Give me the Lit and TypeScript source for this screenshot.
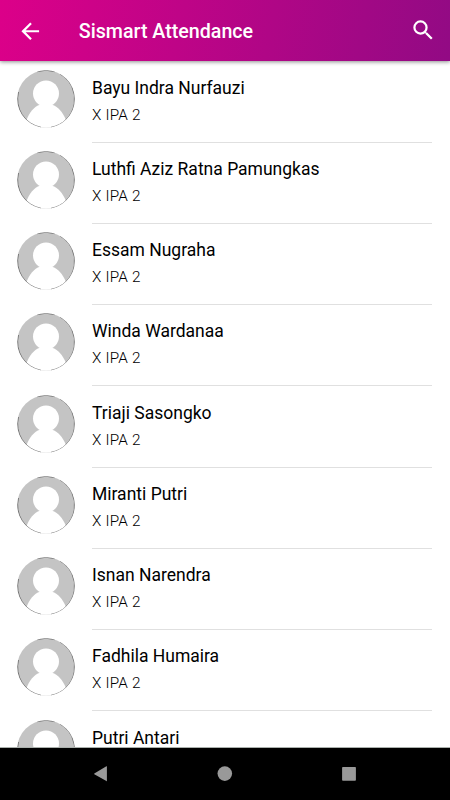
import { LitElement, html, css, nothing } from "lit";
import { customElement, property } from "lit/decorators.js";

interface Student {
  name: string;
  group?: string;
}

const students: Student[] = [
  { name: "Bayu Indra Nurfauzi", group: "X IPA 2" },
  { name: "Luthfi Aziz Ratna Pamungkas", group: "X IPA 2" },
  { name: "Essam Nugraha", group: "X IPA 2" },
  { name: "Winda Wardanaa", group: "X IPA 2" },
  { name: "Triaji Sasongko", group: "X IPA 2" },
  { name: "Miranti Putri", group: "X IPA 2" },
  { name: "Isnan Narendra", group: "X IPA 2" },
  { name: "Fadhila Humaira", group: "X IPA 2" },
  { name: "Putri Antari" },
];

@customElement("student-row")
export class StudentRow extends LitElement {
  @property({ attribute: false }) student!: Student;

  static styles = css`
    :host {
      display: flex;
      box-sizing: border-box;
      flex: none;
      height: 81.25px;
      padding: 0 18px 0 17px;
    }
    .avatar {
      width: 58px;
      height: 58px;
      margin-top: 8.3px;
      flex: none;
    }
    .info {
      flex: 1;
      box-sizing: border-box;
      margin-left: 17px;
      padding-top: 14.2px;
      border-bottom: 1px solid #e0e0e0;
      white-space: nowrap;
    }
    .name {
      font-size: 17.5px;
      line-height: 24px;
      color: #000;
    }
    .group {
      margin-top: 4px;
      font-size: 15.3px;
      font-weight: 300;
      letter-spacing: 0.2px;
      line-height: 22px;
      color: #000;
    }
  `;

  render() {
    return html`
      <svg class="avatar" viewBox="0 0 58 58">
        <defs>
          <clipPath id="disc"><circle cx="29" cy="29" r="28.8" /></clipPath>
        </defs>
        <g clip-path="url(#disc)">
          <rect width="58" height="58" fill="#c4c4c4" />
          <path d="M9 51C12.5 42.5 17 36.5 23 34.8H35C41 36.5 45.5 42 49 50L46 58H12Z" fill="#fff" />
          <circle cx="29" cy="23.5" r="13" fill="#fff" />
          <path
            d="M34 57.3A28.7 28.7 0 0 0 43 4M24 57.3A28.7 28.7 0 0 1 1.5 22M20 1.7A28.7 28.7 0 0 1 38 1.7"
            fill="none"
            stroke="#555"
            stroke-opacity=".8"
            stroke-width=".9"
          />
        </g>
      </svg>
      <div class="info">
        <div class="name">${this.student.name}</div>
        ${this.student.group ? html`<div class="group">${this.student.group}</div>` : nothing}
      </div>
    `;
  }
}

@customElement("app-root")
export class AppRoot extends LitElement {
  static styles = css`
    :host {
      display: flex;
      flex-direction: column;
      width: 450px;
      height: 800px;
      overflow: hidden;
      background: #fff;
      font-family: Roboto, sans-serif;
    }
    .bar {
      display: flex;
      flex: none;
      align-items: center;
      box-sizing: border-box;
      height: 61px;
      padding: 0 13.2px 0 17.4px;
      background: linear-gradient(100deg, #dc0089, #920a84);
      box-shadow: 0 1px 4px rgba(0, 0, 0, 0.45);
      z-index: 1;
      color: #fff;
    }
    .icon {
      width: 26.5px;
      height: 26.5px;
      fill: #fff;
    }
    .back {
      margin-top: 1px;
    }
    .search {
      margin-bottom: 1px;
    }
    .title {
      flex: 1;
      margin: 2px 0 0 34.9px;
      font-size: 19.65px;
      font-weight: 500;
      line-height: 26px;
      white-space: nowrap;
    }
    .list {
      display: flex;
      flex-direction: column;
      flex: 1;
      min-height: 0;
      padding-top: 0.4px;
      overflow: hidden;
    }
    .nav {
      display: flex;
      flex: none;
      box-sizing: border-box;
      height: 53px;
      padding: 0 38.5px;
      border-top: 1px solid #aab0ac;
      background: #000;
    }
    .key {
      display: flex;
      flex: 1;
      align-items: center;
      justify-content: center;
    }
    .key svg {
      width: 16px;
      height: 16px;
      fill: #999;
    }
  `;

  render() {
    return html`
      <header class="bar">
        <svg class="icon back" viewBox="0 0 24 24">
          <path d="M20 11H7.83l5.59-5.59L12 4l-8 8 8 8 1.41-1.41L7.83 13H20v-2z" />
        </svg>
        <div class="title">Sismart Attendance</div>
        <svg class="icon search" viewBox="0 0 24 24">
          <path
            d="M15.5 14h-.79l-.28-.27A6.47 6.47 0 0 0 16 9.5 6.5 6.5 0 1 0 9.5 16c1.61 0 3.09-.59 4.23-1.57l.27.28v.79l5 4.99L20.49 19l-4.99-5zm-6 0a4.5 4.5 0 1 1 0-9 4.5 4.5 0 0 1 0 9z"
          />
        </svg>
      </header>
      <main class="list">
        ${students.map((s) => html`<student-row .student=${s}></student-row>`)}
      </main>
      <footer class="nav">
        <div class="key">
          <svg viewBox="0 0 16 16"><path d="M13.9 .6V15Q13.9 15.5 13.4 15.1L1.3 8.2Q.8 7.8 1.3 7.4L13.4 .3Q13.9 .1 13.9 .6Z" /></svg>
        </div>
        <div class="key"><svg viewBox="0 0 16 16"><circle cx="7.8" cy="7.6" r="7.3" /></svg></div>
        <div class="key"><svg viewBox="0 0 16 16"><rect x="1.1" y="1" width="13.8" height="13.8" rx=".8" /></svg></div>
      </footer>
    `;
  }
}
